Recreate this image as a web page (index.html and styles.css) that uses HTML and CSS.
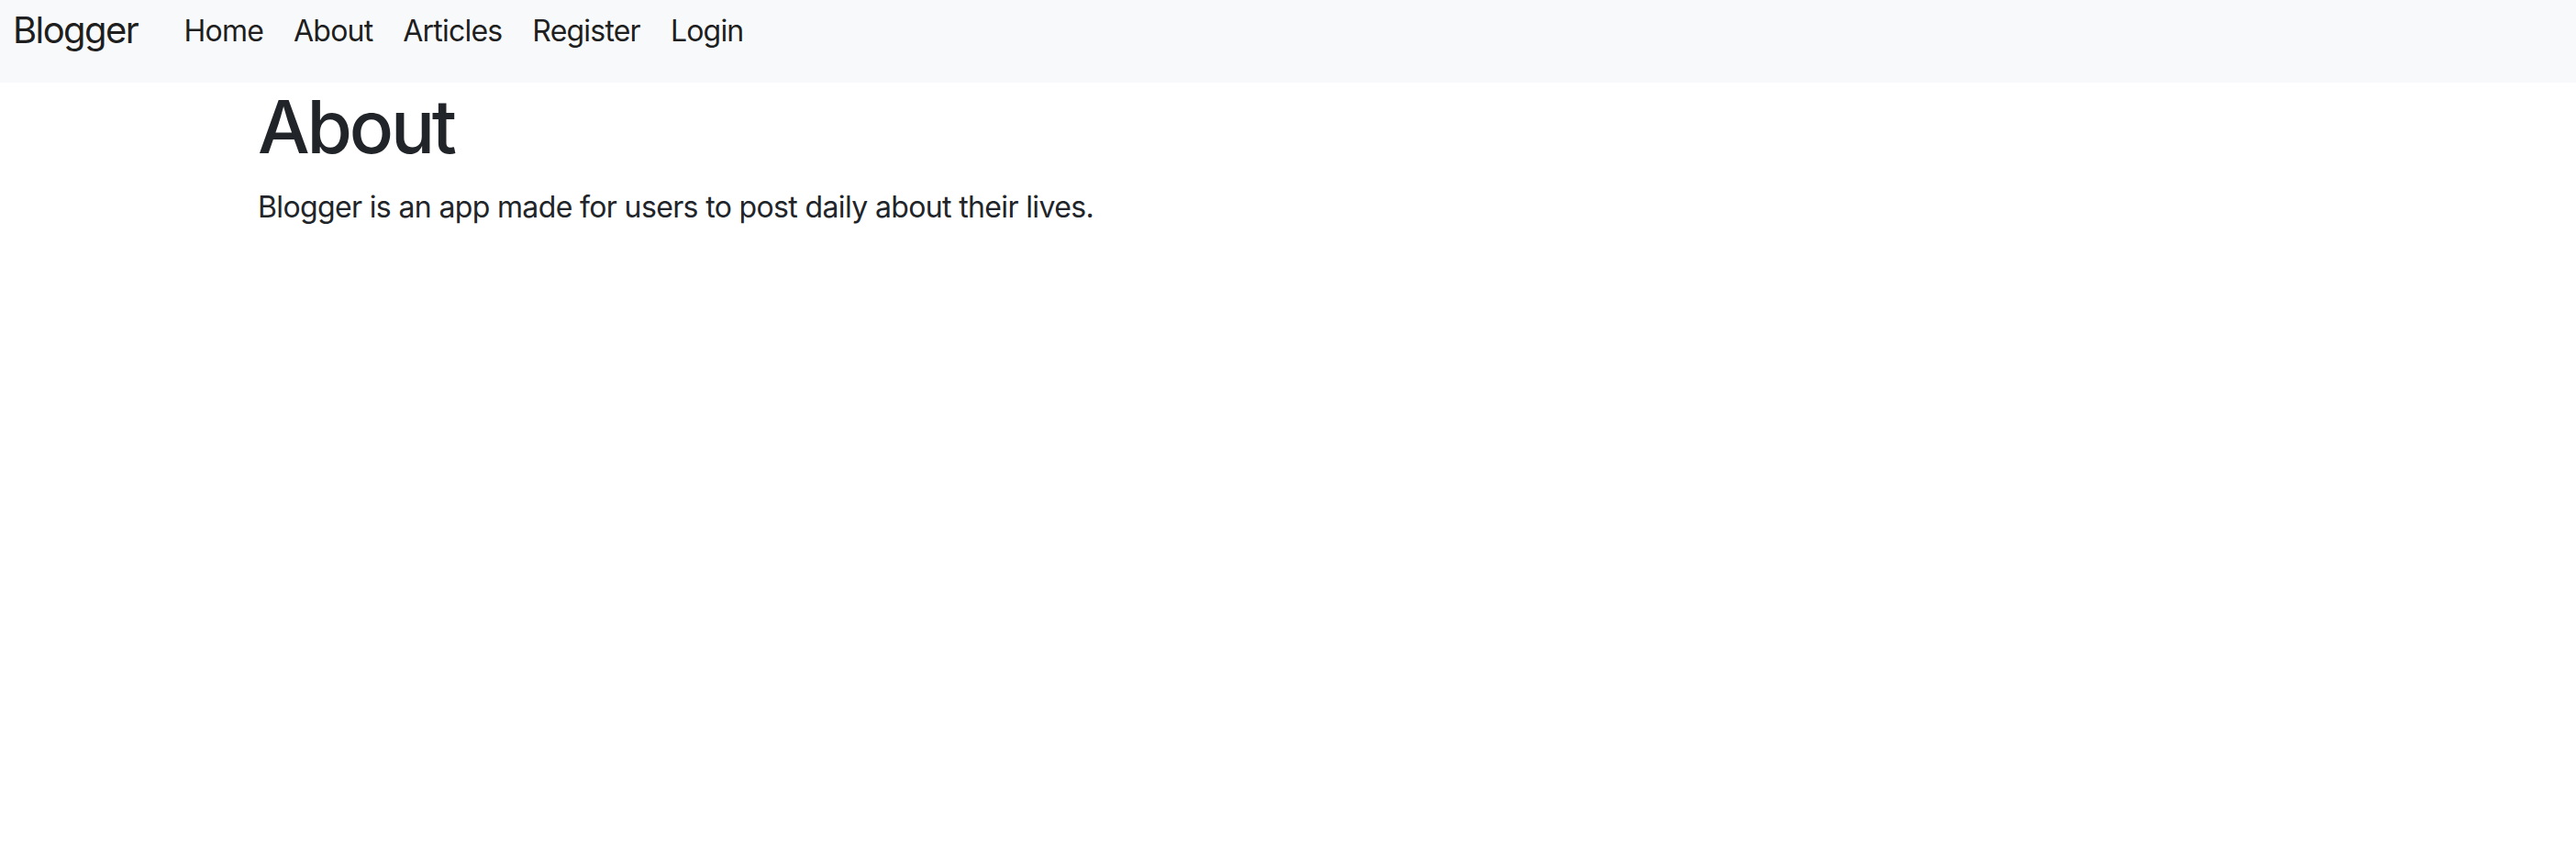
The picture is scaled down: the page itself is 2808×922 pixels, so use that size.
FILE: index.html
```html
<!DOCTYPE html>
<html lang="en">
<head>
<meta charset="utf-8">
<title>Blogger - About</title>
<link rel="stylesheet" href="styles.css">
</head>
<body>
<nav class="navbar">
  <a class="brand" href="#">Blogger</a>
  <ul class="nav">
    <li><a class="nav-link" href="#">Home</a></li>
    <li><a class="nav-link" href="#">About</a></li>
    <li><a class="nav-link" href="#">Articles</a></li>
    <li><a class="nav-link" href="#">Register</a></li>
    <li><a class="nav-link" href="#">Login</a></li>
  </ul>
</nav>
<main class="container">
  <h1 class="title">About</h1>
  <p class="lead-text">Blogger is an app made for users to post daily about their lives.</p>
</main>
</body>
</html>
```

FILE: styles.css
```css
* { box-sizing: border-box; }
html, body {
  margin: 0;
  padding: 0;
  background: #fff;
}
body {
  font-family: Inter, "Noto Sans", "Liberation Sans", sans-serif;
  color: #212529;
  font-size: 32px;
  line-height: 1.5;
  letter-spacing: -0.02em;
}
.navbar {
  display: flex;
  align-items: flex-start;
  height: 90px;
  padding: 0 14px;
  background: #f8f9fa;
}
.brand {
  font-size: 40px;
  line-height: 60px;
  padding-top: 3px;
  margin-right: 34px;
  letter-spacing: -0.04em;
  color: rgba(0, 0, 0, 0.9);
  text-decoration: none;
}
.nav {
  display: flex;
  list-style: none;
  margin: 0;
  padding: 0;
}
.nav-link {
  display: block;
  font-size: 32px;
  line-height: 48px;
  padding: 10px 16.5px 0;
  letter-spacing: -0.025em;
  color: rgba(0, 0, 0, 0.9);
  text-decoration: none;
}
.container {
  max-width: 2246px;
  margin: 0 auto;
}
.title {
  margin: 0 0 16px;
  font-size: 80px;
  font-weight: 500;
  line-height: 1.2;
  letter-spacing: -0.04em;
}
.lead-text {
  margin: 0;
}
```
